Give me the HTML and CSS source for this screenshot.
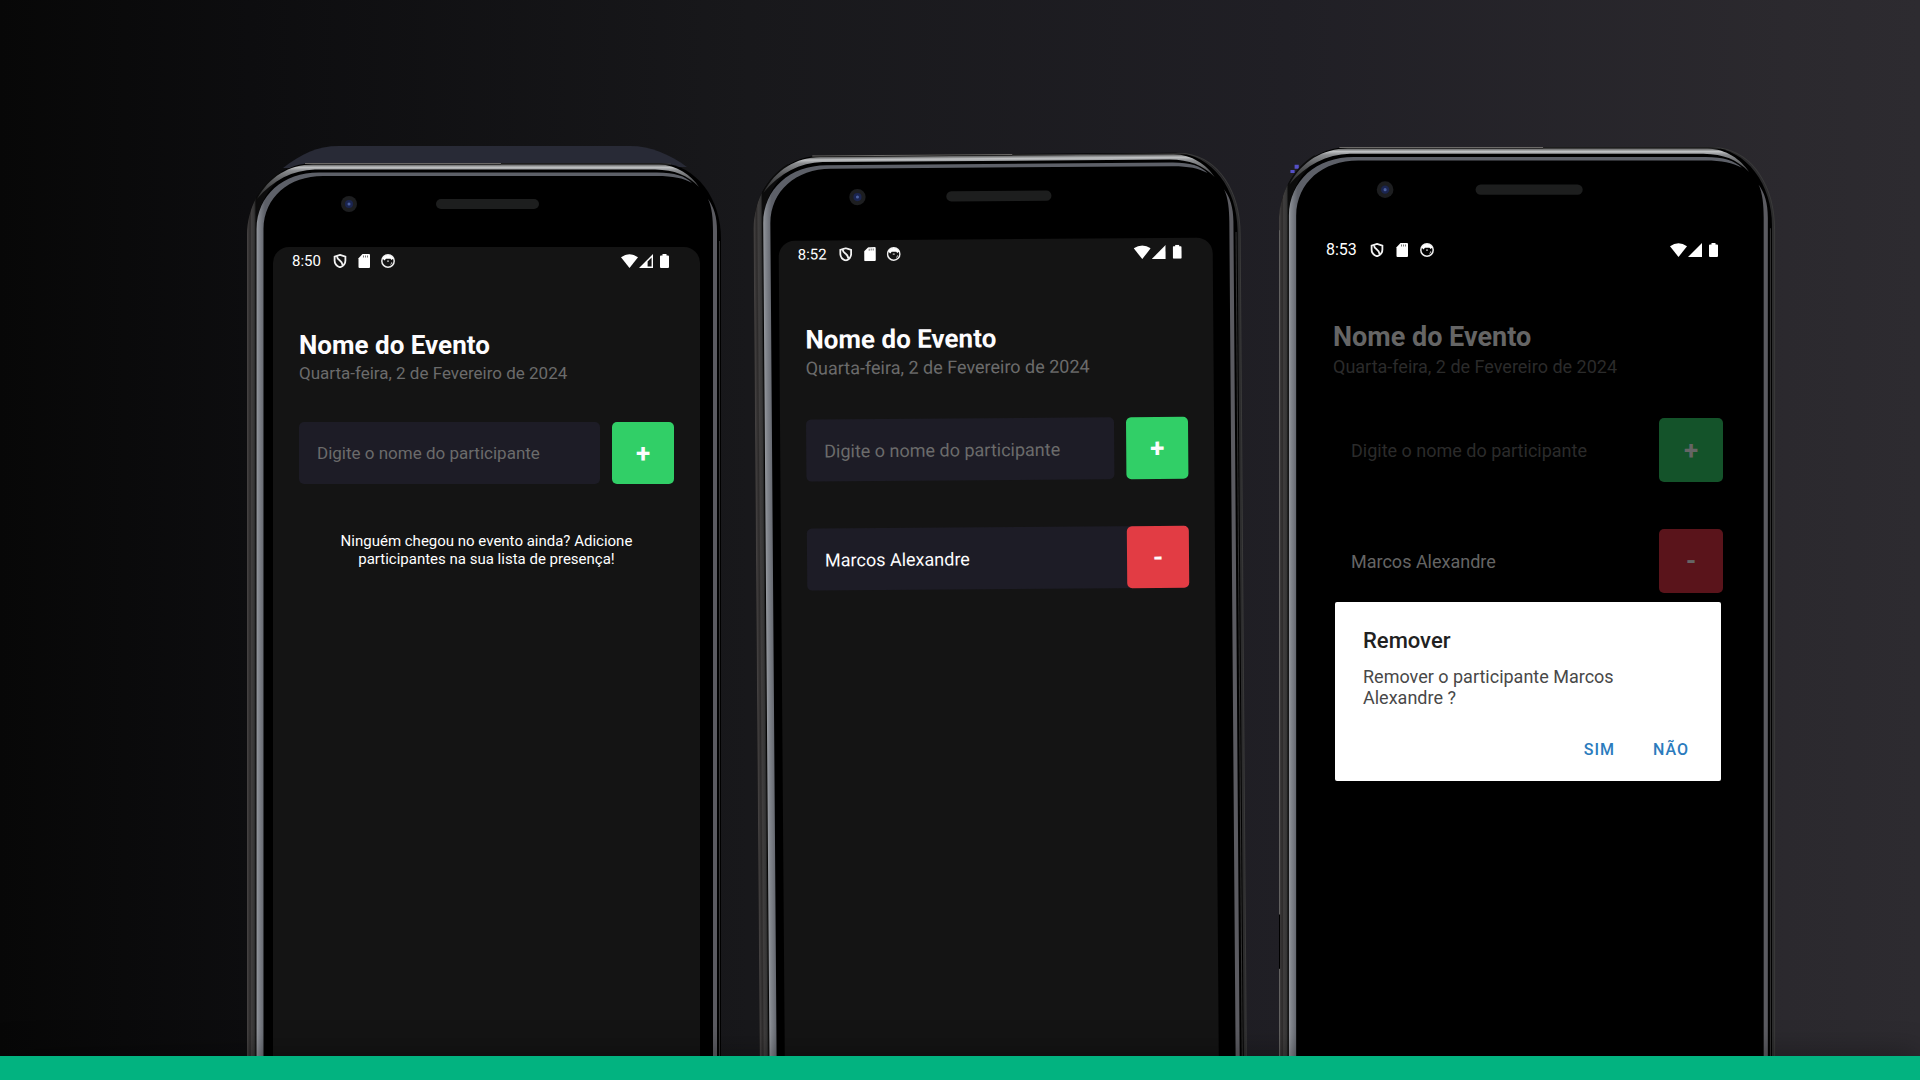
FILE: index.html
```html
<!DOCTYPE html>
<html lang="pt-BR">
<head>
<meta charset="utf-8">
<title>Lista de presença</title>
<link rel="stylesheet" href="styles.css">
</head>
<body>
<svg class="defs" aria-hidden="true">
  <defs>
    <linearGradient id="edge" gradientUnits="userSpaceOnUse" x1="9" y1="0" x2="18" y2="0">
      <stop offset="0" stop-color="#9b9ea3"/><stop offset=".3" stop-color="#82868d"/><stop offset="1" stop-color="#5d6068"/>
    </linearGradient>
    <linearGradient id="shine" gradientUnits="userSpaceOnUse" x1="0" y1="1" x2="0" y2="34">
      <stop offset="0" stop-color="#4a4a4a"/><stop offset=".1" stop-color="#bfc1c3"/><stop offset=".2" stop-color="#8b8d90"/><stop offset=".5" stop-color="#5a5b5d"/><stop offset="1" stop-color="#2c2c2c"/>
    </linearGradient>
    <linearGradient id="rim" gradientUnits="userSpaceOnUse" x1="0" y1="0" x2="9" y2="0">
      <stop offset="0" stop-color="#474444"/><stop offset=".35" stop-color="#2c2a2a"/><stop offset=".5" stop-color="#403e3e"/><stop offset=".8" stop-color="#363636"/><stop offset="1" stop-color="#0c0c0c"/>
    </linearGradient>
  </defs>
  <symbol id="frame" overflow="visible">
    <path fill="#000" d="M0 2000V72C0 30 30 1 66 0H414C450 2 474 36 474 76V2000Z"/>
    <path fill="url(#rim)" d="M0 2000V72C0 44 14 20 34 8L38 12C20 24 9 46 9 72V2000Z"/>
    <path fill="none" stroke="#6b6967" d="M58 0.5H254"/>
    <path fill="none" stroke="#3d3c3c" d="M254 1H424"/>
    <path fill="url(#shine)" d="M10 36C22 14 42 1.500 66 1.500H412C430 2 444 12 452 24C440 12 428 7 408 6.500H68C46 7 26 17 10 36Z"/>
    <path fill="url(#edge)" d="M9.500 2000V66C10 32 36 9.500 72 9.500H410C428 9.500 438 13 445 20C436 15 426 13 410 13H76C42 13 17 34 16.500 66V2000Z"/>
    <path fill="#5b5b61" d="M461 36C465 44 466 56 466 68V2000H470V68C470 54 467 44 461 36Z"/>
    <path fill="none" stroke="#323232" d="M472.500 78V2000"/>
    <rect x="189" y="36" width="103" height="10" rx="5" fill="#1d1e1e"/>
    <circle cx="102" cy="41" r="8" fill="#1d1e20"/>
    <circle cx="102" cy="41" r="4" fill="#1b2550"/>
    <circle cx="102" cy="41" r="1.500" fill="#4a5f9e"/>
  </symbol>
  <symbol id="side" overflow="visible">
    <path fill="none" stroke="#2c2c2d" stroke-width="5" d="M422 3C452 8 474 40 474 80V2000"/>
    <path fill="none" stroke="#3a3a3a" d="M424 1C456 6 476.500 38 476.500 80V2000"/>
  </symbol>
  <symbol id="shield" viewBox="0 0 14 14">
    <path fill="none" stroke="#f2f2f2" stroke-width="1.800" d="M7 .9L12.400 2.600V6.500C12.400 10 9.800 12.300 7 13.300C4.200 12.300 1.600 10 1.600 6.500V2.600Z"/>
    <path fill="none" stroke="#f2f2f2" stroke-width="1.800" d="M4 2.200C4 6.500 9.500 6 9.600 11.200"/>
  </symbol>
  <symbol id="card" viewBox="0 0 14 14">
    <path fill="#fff" d="M5.500 0H12Q13 0 13 1V13Q13 14 12 14H2.500Q1.500 14 1.500 13V4.200Z"/>
    <path stroke="#777" d="M6.500 1.500V3.500M8.500 1.500V3.500M10.500 1.500V3.500"/>
  </symbol>
  <symbol id="face" viewBox="0 0 14 14">
    <circle cx="7" cy="7" r="6.200" fill="none" stroke="#eee" stroke-width="1.500"/>
    <path fill="#fff" d="M1.500 4.500Q3.500 1 7 1T12.500 4.500L10.500 6L9.500 4.800H5L3.500 6.500Z"/>
    <path fill="#bbb" d="M6 6.500H8V7.700H6ZM10.500 8L11.500 9L9 11.500Z"/>
  </symbol>
  <symbol id="wifi" viewBox="0 0 17 14">
    <path fill="#fff" d="M8.500 14L0 3.200Q8.500-2.600 17 3.200Z"/>
  </symbol>
  <symbol id="signal" viewBox="0 0 14 14"><path fill="#fff" d="M14 0V14H0Z"/></symbol>
  <symbol id="signal-low" viewBox="0 0 14 14">
    <path fill="#fff" fill-rule="evenodd" d="M14 0V14H0ZM12.600 3.600L8.600 7.600V12.600H12.600Z"/>
  </symbol>
  <symbol id="battery" viewBox="0 0 9 14">
    <path fill="#fff" d="M2.500 1.500V0H6.500V1.500H8Q9 1.500 9 2.500V13Q9 14 8 14H1Q0 14 0 13V2.500Q0 1.500 1 1.500Z"/>
  </symbol>
</svg>

<main class="stage">
  <article class="phone phone-empty">
    <svg class="frame" viewBox="0 0 474 900" aria-hidden="true">
      <path fill="#282a36" d="M36 5C54-9 70-17 92-17H383C404-17 422-9 440 4Z"/>
      <use href="#frame"/>
    </svg>
    <section class="screen">
      <div class="status">
        <span class="time">8:50</span>
        <svg class="icon"><use href="#shield"/></svg>
        <svg class="icon"><use href="#card"/></svg>
        <svg class="icon"><use href="#face"/></svg>
        <span class="signals">
          <svg class="wifi"><use href="#wifi"/></svg>
          <svg class="icon"><use href="#signal-low"/></svg>
          <svg class="battery"><use href="#battery"/></svg>
        </span>
      </div>
      <div class="content">
        <h1 class="title">Nome do Evento</h1>
        <p class="date">Quarta-feira, 2 de Fevereiro de 2024</p>
        <form class="form">
          <input class="field" type="text" aria-label="Nome do participante" placeholder="Digite o nome do participante">
          <button class="action add" type="button">+</button>
        </form>
        <p class="empty">Ninguém chegou no evento ainda? Adicione participantes na sua lista de presença!</p>
      </div>
    </section>
  </article>

  <article class="phone phone-list">
    <svg class="frame" viewBox="0 0 474 900" aria-hidden="true">
      <use href="#side"/><use href="#frame"/>
    </svg>
    <section class="screen">
      <div class="status">
        <span class="time">8:52</span>
        <svg class="icon"><use href="#shield"/></svg>
        <svg class="icon"><use href="#card"/></svg>
        <svg class="icon"><use href="#face"/></svg>
        <span class="signals">
          <svg class="wifi"><use href="#wifi"/></svg>
          <svg class="icon"><use href="#signal"/></svg>
          <svg class="battery"><use href="#battery"/></svg>
        </span>
      </div>
      <div class="content">
        <h1 class="title">Nome do Evento</h1>
        <p class="date">Quarta-feira, 2 de Fevereiro de 2024</p>
        <form class="form">
          <input class="field" type="text" aria-label="Nome do participante" placeholder="Digite o nome do participante">
          <button class="action add" type="button">+</button>
        </form>
        <ul class="people">
          <li class="person"><span class="name">Marcos Alexandre</span><button class="action remove" type="button">-</button></li>
        </ul>
      </div>
    </section>
  </article>

  <article class="phone phone-dialog">
    <svg class="frame" viewBox="0 0 474 900" aria-hidden="true">
      <use href="#side"/>
      <path fill="#5550c8" d="M11 22H15V25H11ZM15 17H19V21H15Z"/>
      <use href="#frame"/>
      <path stroke="#626160" d="M.5 80V746M.5 790V2000"/>
      <path stroke="#000" d="M.5 738V790"/>
    </svg>
    <section class="screen">
      <div class="status">
        <span class="time">8:53</span>
        <svg class="icon"><use href="#shield"/></svg>
        <svg class="icon"><use href="#card"/></svg>
        <svg class="icon"><use href="#face"/></svg>
        <span class="signals">
          <svg class="wifi"><use href="#wifi"/></svg>
          <svg class="icon"><use href="#signal"/></svg>
          <svg class="battery"><use href="#battery"/></svg>
        </span>
      </div>
      <div class="content">
        <h1 class="title">Nome do Evento</h1>
        <p class="date">Quarta-feira, 2 de Fevereiro de 2024</p>
        <form class="form">
          <input class="field" type="text" aria-label="Nome do participante" placeholder="Digite o nome do participante">
          <button class="action add" type="button">+</button>
        </form>
        <ul class="people">
          <li class="person"><span class="name">Marcos Alexandre</span><button class="action remove" type="button">-</button></li>
        </ul>
      </div>
      <div class="dialog" role="alertdialog" aria-labelledby="dialog-title" aria-describedby="dialog-text">
        <h2 class="dialog-title" id="dialog-title">Remover</h2>
        <p class="dialog-text" id="dialog-text">Remover o participante Marcos Alexandre ?</p>
        <div class="dialog-actions">
          <button class="choice" type="button">SIM</button>
          <button class="choice" type="button">NÃO</button>
        </div>
      </div>
    </section>
  </article>
</main>
<footer class="bar"></footer>
</body>
</html>
```
FILE: styles.css
```css
* { box-sizing: border-box; }

body {
  margin: 0;
  min-height: 100vh;
  display: flex;
  flex-direction: column;
  font-family: Roboto, "Liberation Sans", sans-serif;
  color: #fff;
  background: linear-gradient(to right, #070707, #0d0d0f 13%, #18181b 39%, #201f25 67%, #2b292e 93%, #2d2b30);
}

h1, h2, p, ul { margin: 0; padding: 0; }

.defs { position: absolute; width: 0; height: 0; }

.stage {
  flex: 1;
  display: grid;
  grid-template-columns: 247fr 474fr 32fr 484fr 42fr 493fr 148fr;
  overflow: hidden;
}

.phone {
  --ink: #fdfcfe;
  --muted: #6b6b6b;
  --surface: #141414;
  --field: #1d1c26;
  --green: #31cf67;
  --red: #e23c44;
  --title: 26px;
  --text: 18px;
  --control: 62px;
  position: relative;
  display: flex;
}

.phone-empty {
  --text: 17px;
  grid-column: 2;
  margin-top: 163px;
  padding: 84px 21px 0 26px;
}

.phone-list {
  grid-column: 4;
  margin: 156px 0 -12px;
  padding: 85px 25px 0 25px;
  transform: rotate(-0.43deg);
  transform-origin: 0 0;
}

.phone-dialog {
  --ink: #656565;
  --muted: #2b2b2b;
  --surface: #000;
  --field: #000;
  --green: #14532a;
  --red: #5a141b;
  --title: 27px;
  --control: 64px;
  grid-column: 6;
  margin-top: 147px;
  padding: 88px 23px 0 28px;
}

.frame {
  position: absolute;
  top: 0;
  left: 0;
  width: 100%;
  overflow: visible;
}

.screen {
  position: relative;
  flex: 1;
  background: var(--surface);
  border-radius: 16px 16px 0 0;
}

.status {
  display: flex;
  align-items: center;
  gap: 10px;
  height: 28px;
  padding: 0 31px 0 19px;
  color: #fff;
}
.phone-empty .status { height: 27px; }
.phone-dialog .status { gap: 11px; height: 30px; }

.time { margin-right: 2px; font-size: 15px; line-height: 20px; }
.phone-dialog .time { font-size: 16px; }
.icon { width: 14px; height: 14px; }
.wifi { width: 17px; height: 14px; }
.battery { width: 9px; height: 14px; margin-left: 6px; }
.signals { display: flex; gap: 1px; margin-left: auto; }

.content { padding: 55px 26px 0; }
.phone-dialog .content { padding-top: 56px; }

.title { font-size: var(--title); line-height: 32px; font-weight: 700; color: var(--ink); }
.date { font-size: var(--text); line-height: 26px; color: var(--muted); }
.phone-empty .date { line-height: 24px; }
.phone-dialog .date { line-height: 28px; }

.form { display: flex; gap: 12px; margin-top: 37px; }
.phone-list .form { margin-top: 38px; }

.field {
  flex: 1;
  min-width: 0;
  height: var(--control);
  padding: 0 18px;
  border: 0;
  border-radius: 5px;
  background: var(--field);
  color: var(--ink);
  font: inherit;
  font-size: var(--text);
}
.field::placeholder { color: var(--muted); opacity: 1; }

.action {
  width: var(--control);
  height: var(--control);
  padding: 0;
  border: 0;
  border-radius: 5px;
  color: var(--ink);
  font: inherit;
  font-size: 26px;
  font-weight: 700;
}
.add { background: var(--green); }
.remove { background: var(--red); }

.empty {
  margin-top: 48px;
  padding: 0 32px;
  font-size: 15px;
  line-height: 18px;
  text-align: center;
}

.people { margin-top: 47px; list-style: none; }
.person {
  display: flex;
  align-items: center;
  justify-content: space-between;
  padding-left: 18px;
  border-radius: 5px;
  background: var(--field);
}
.name { font-size: var(--text); color: var(--ink); }

.dialog {
  position: absolute;
  top: 367px;
  left: 28px;
  right: 28px;
  padding: 25px 20px 14px 28px;
  border-radius: 2px;
  background: #fff;
}
.dialog-title { font-size: 22px; line-height: 28px; font-weight: 500; color: #212121; }
.dialog-text { margin-top: 11px; padding-right: 48px; font-size: 18px; line-height: 21px; color: #484848; }
.dialog-actions { display: flex; justify-content: flex-end; gap: 14px; margin-top: 23px; }
.choice {
  height: 36px;
  padding: 0 12px;
  border: 0;
  background: none;
  color: #2b7bbd;
  font: inherit;
  font-size: 16px;
  font-weight: 500;
  letter-spacing: 1px;
}

.bar {
  position: relative;
  height: 24px;
  background: #02b380;
  box-shadow: 0 0 32px rgba(0, 0, 0, 0.4);
}
```
